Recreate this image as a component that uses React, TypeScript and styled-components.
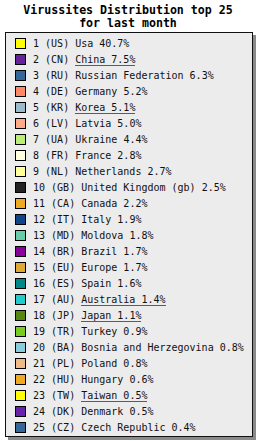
import * as React from "react";
import styled, { createGlobalStyle } from "styled-components";

interface ICountry {
  code: string;
  name: string;
  share: string;
  color: string;
  marked?: boolean;
}

const countries: ICountry[] = [
  { code: "US", name: "Usa", share: "40.7%", color: "#ffff00" },
  { code: "CN", name: "China", share: "7.5%", color: "#66229a", marked: true },
  { code: "RU", name: "Russian Federation", share: "6.3%", color: "#336699" },
  { code: "DE", name: "Germany", share: "5.2%", color: "#ff8866" },
  { code: "KR", name: "Korea", share: "5.1%", color: "#99bbcc", marked: true },
  { code: "LV", name: "Latvia", share: "5.0%", color: "#ffaa88" },
  { code: "UA", name: "Ukraine", share: "4.4%", color: "#bbee77" },
  { code: "FR", name: "France", share: "2.8%", color: "#ffffdd" },
  { code: "NL", name: "Netherlands", share: "2.7%", color: "#ffff99" },
  { code: "GB", name: "United Kingdom (gb)", share: "2.5%", color: "#222222" },
  { code: "CA", name: "Canada", share: "2.2%", color: "#eeaa22" },
  { code: "IT", name: "Italy", share: "1.9%", color: "#114488" },
  { code: "MD", name: "Moldova", share: "1.8%", color: "#66ccaa" },
  { code: "BR", name: "Brazil", share: "1.7%", color: "#880099" },
  { code: "EU", name: "Europe", share: "1.7%", color: "#ddaa33" },
  { code: "ES", name: "Spain", share: "1.6%", color: "#008888" },
  { code: "AU", name: "Australia", share: "1.4%", color: "#22cccc", marked: true },
  { code: "JP", name: "Japan", share: "1.1%", color: "#558811", marked: true },
  { code: "TR", name: "Turkey", share: "0.9%", color: "#77cc22" },
  { code: "BA", name: "Bosnia and Herzegovina", share: "0.8%", color: "#88ccdd" },
  { code: "PL", name: "Poland", share: "0.8%", color: "#eebb88" },
  { code: "HU", name: "Hungary", share: "0.6%", color: "#eeaa22" },
  { code: "TW", name: "Taiwan", share: "0.5%", color: "#ffff00", marked: true },
  { code: "DK", name: "Denmark", share: "0.5%", color: "#6622aa" },
  { code: "CZ", name: "Czech Republic", share: "0.4%", color: "#336699" },
];

const GlobalStyle = createGlobalStyle`
  body {
    margin: 0;
    background: #ffffff;
  }
`;

export default function App() {
  return (
    <>
      <GlobalStyle />
      <Page>
        <Title>
          Virussites Distribution top 25
          <br />
          for last month
        </Title>
        <Legend>
          {countries.map(({ code, name, share, color, marked }, i) => (
            <Row key={code}>
              <Swatch color={color} />
              <Label>
                {i + 1} ({code}){" "}
                <Name $marked={marked}>
                  {name} {share}
                </Name>
              </Label>
            </Row>
          ))}
        </Legend>
      </Page>
    </>
  );
}

const Page = styled.div`
  width: 256px;
  height: 441px;
  padding-top: 4px;
  box-sizing: border-box;
`;

const Title = styled.div`
  text-align: center;
  font-family: "DejaVu Sans Mono", "Liberation Mono", monospace;
  font-weight: bold;
  font-size: 11.6px;
  line-height: 13px;
  color: #000;
`;

const Legend = styled.ul`
  list-style: none;
  margin: 2px 0 0 5px;
  padding: 2px 0 0 9px;
  width: 248px;
  height: 405px;
  box-sizing: border-box;
  background: #ececec;
  border: 1px solid #111;
  box-shadow: 3px 3px 0 #8a8a8a;
`;

const Row = styled.li`
  display: flex;
  align-items: center;
  height: 16px;
  gap: 7px;
`;

const Swatch = styled.span<{ color: string }>`
  width: 11px;
  height: 11px;
  box-sizing: border-box;
  border: 1px solid #000;
  background: ${(p) => p.color};
  flex-shrink: 0;
`;

const Label = styled.span`
  font-family: "DejaVu Sans Mono", "Liberation Mono", monospace;
  font-size: 10px;
  color: #111;
  white-space: pre;
`;

const Name = styled.span<{ $marked?: boolean }>`
  border-bottom: 1px solid ${(p) => (p.$marked ? "#e82020" : "transparent")};
`;
